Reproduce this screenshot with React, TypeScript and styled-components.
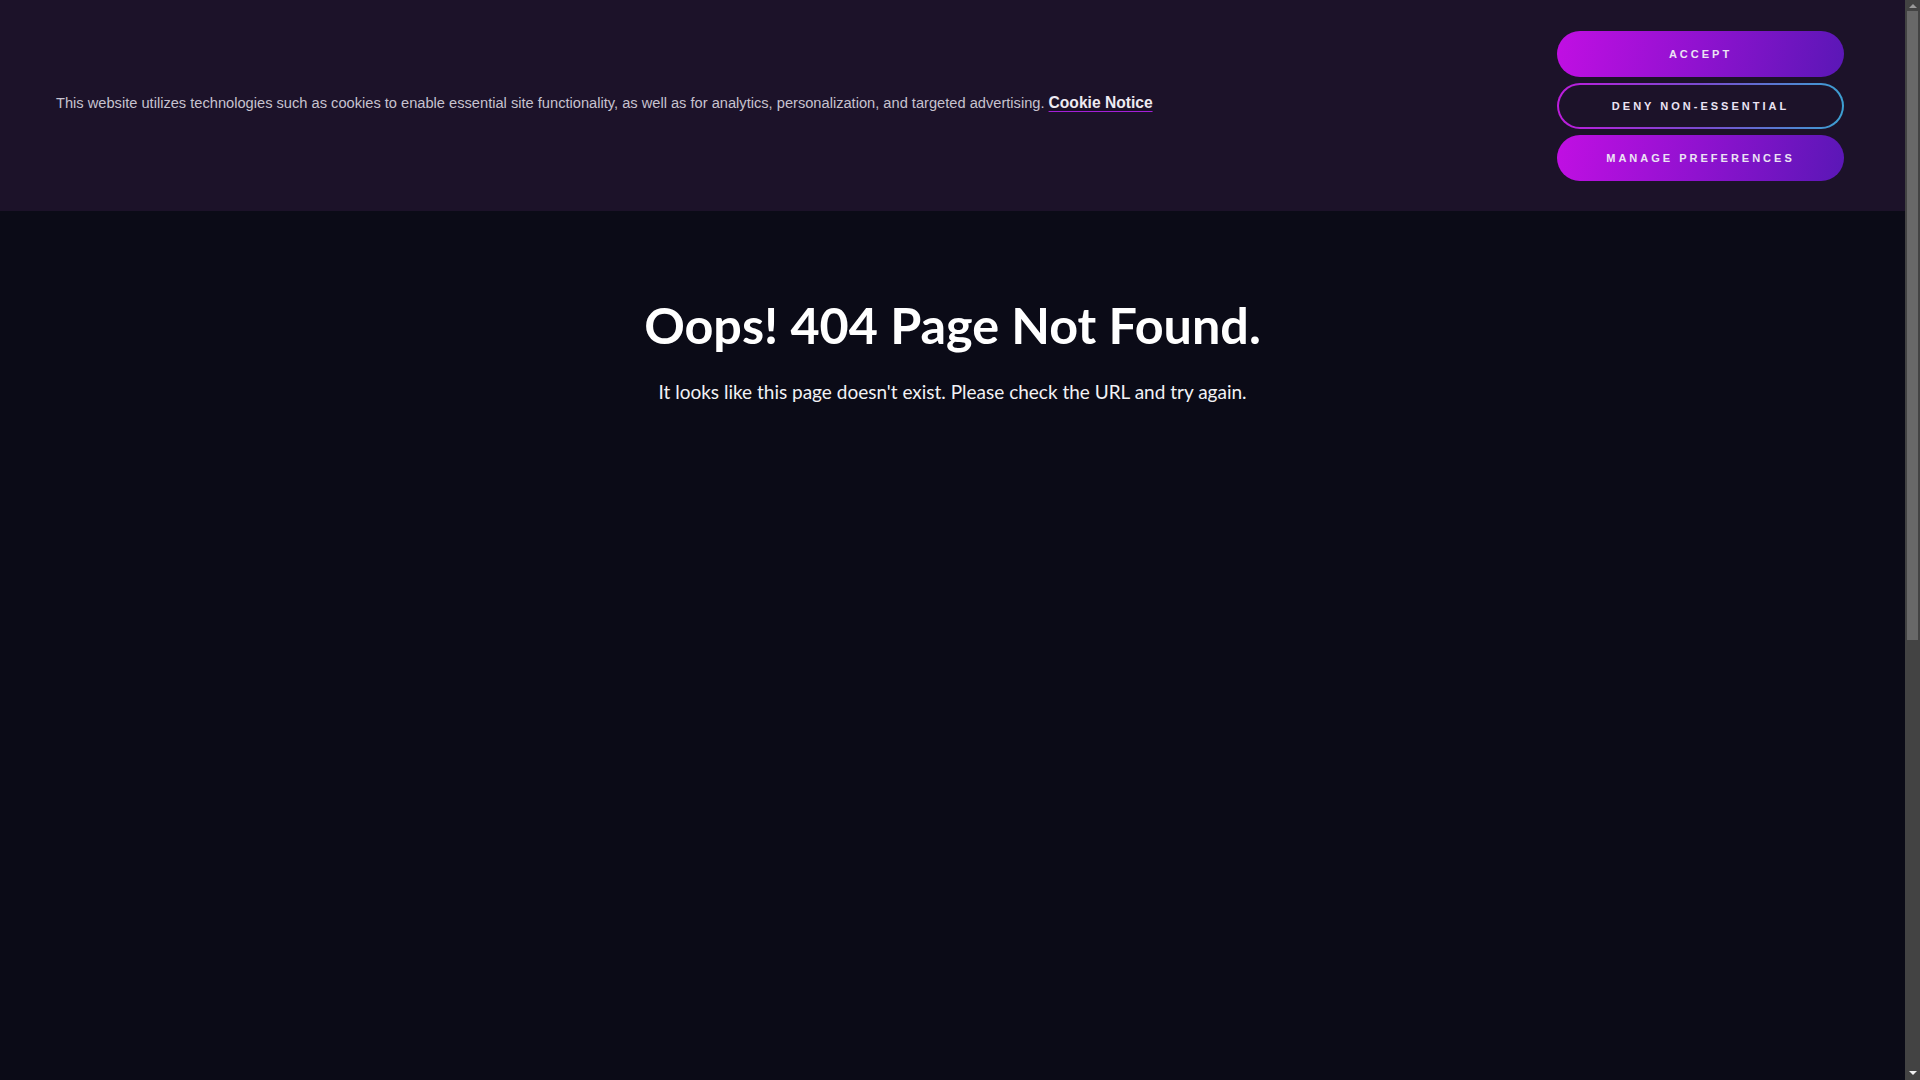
import React from "react";
import styled, { createGlobalStyle } from "styled-components";

const Global = createGlobalStyle`
  html, body { margin: 0; padding: 0; background: #0b0b17; }
  body { font-family: "Liberation Sans", Arial, sans-serif; }
  * { box-sizing: border-box; }
`;

const Page = styled.div`
  min-height: 1800px;
  margin-right: 15px;
  display: flex;
  flex-direction: column;
  background: #0b0b17;
`;

const ScrollTrack = styled.div`
  position: fixed;
  top: 0;
  right: 0;
  width: 15px;
  height: 100vh;
  background: #434343;
  display: flex;
  flex-direction: column;
  align-items: center;
`;

const Arrow = styled.div<{ $dir: "up" | "down" }>`
  width: 0;
  height: 0;
  border-left: 4px solid transparent;
  border-right: 4px solid transparent;
  ${(p) =>
    p.$dir === "up"
      ? "border-bottom: 4px solid #9a9a9a; margin-top: 4px;"
      : "border-top: 4px solid #f0f0f0; margin-top: auto; margin-bottom: 5px;"}
`;

const Thumb = styled.div`
  width: 11px;
  height: 629px;
  margin-top: 3px;
  background: #686868;
`;

const Banner = styled.section`
  background: #1c1229;
  height: 211px;
  display: flex;
  align-items: center;
  justify-content: space-between;
  padding: 0 61px 0 56px;
`;

const BannerText = styled.p`
  margin: 0;
  margin-top: -6px;
  font-family: "Liberation Sans", Arial, sans-serif;
  font-size: 14.65px;
  color: #c7c2cf;
  line-height: 1.4;
`;

const NoticeLink = styled.a`
  color: #eeeaf2;
  font-weight: 700;
  font-size: 15.6px;
  text-decoration: underline;
  text-decoration-color: #a41fd8;
  text-underline-offset: 3px;
  cursor: pointer;
`;

const ButtonStack = styled.div`
  display: flex;
  flex-direction: column;
  gap: 6px;
  width: 287px;
`;

const PillButton = styled.button<{ $variant?: "solid" | "outline" }>`
  height: 46px;
  width: 100%;
  border-radius: 23px;
  font-family: "Liberation Sans", Arial, sans-serif;
  font-weight: 700;
  font-size: 11px;
  letter-spacing: 3px;
  text-transform: uppercase;
  color: #ece4f4;
  cursor: pointer;
  padding: 0;
  border: 2px solid transparent;
  background: ${(p) =>
    p.$variant === "outline"
      ? "linear-gradient(#1c1229, #1c1229) padding-box, linear-gradient(90deg, #bd1cdc, #7a4bd0 50%, #3ca0d2) border-box"
      : "linear-gradient(100deg, #c10fe3 0%, #8f12cf 50%, #5a17b6 100%) border-box"};
`;

const Main = styled.main`
  display: flex;
  flex-direction: column;
  align-items: center;
  padding-top: 84px;
`;

const Title = styled.h1`
  margin: 0;
  font-family: Lato, "Noto Sans", sans-serif;
  font-weight: 700;
  font-size: 50.3px;
  line-height: 60px;
  color: #ffffff;
`;

const Subtitle = styled.p`
  margin: 24px 0 0;
  font-family: Lato, "Noto Sans", sans-serif;
  font-size: 19px;
  line-height: 26px;
  color: #f2f2f5;
`;

export default function App() {
  return (
    <>
      <Global />
      <Page>
        <Banner>
          <BannerText>
            This website utilizes technologies such as cookies to enable essential site functionality, as well as for
            analytics, personalization, and targeted advertising. <NoticeLink>Cookie Notice</NoticeLink>
          </BannerText>
          <ButtonStack>
            <PillButton>Accept</PillButton>
            <PillButton $variant="outline">Deny Non-Essential</PillButton>
            <PillButton>Manage Preferences</PillButton>
          </ButtonStack>
        </Banner>
        <Main>
          <Title>Oops! 404 Page Not Found.</Title>
          <Subtitle>It looks like this page doesn't exist. Please check the URL and try again.</Subtitle>
        </Main>
      </Page>
      <ScrollTrack aria-hidden="true">
        <Arrow $dir="up" />
        <Thumb />
        <Arrow $dir="down" />
      </ScrollTrack>
    </>
  );
}
